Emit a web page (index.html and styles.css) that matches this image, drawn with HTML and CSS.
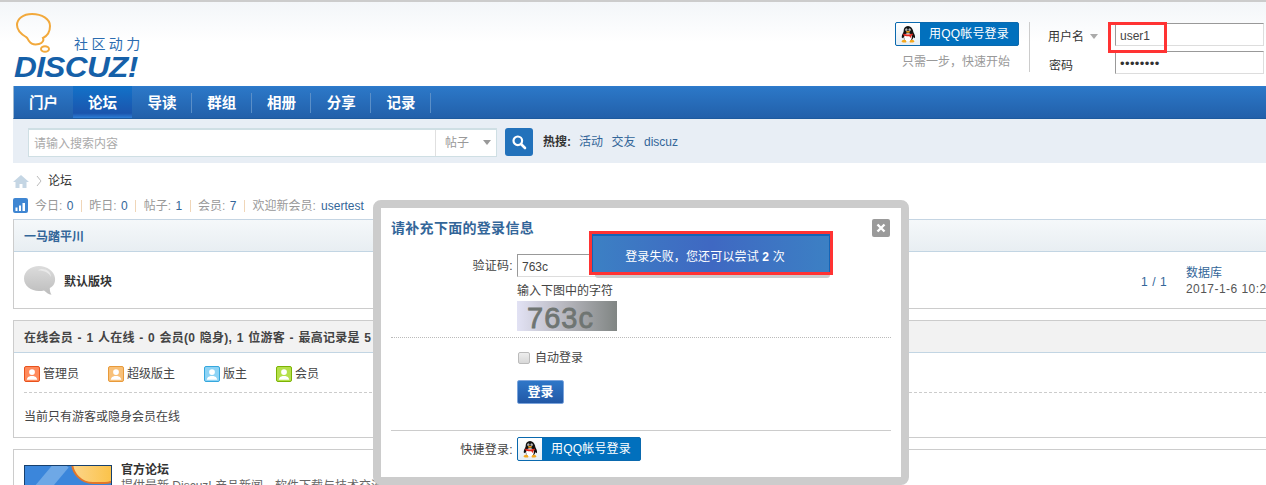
FILE: index.html
```html
<!DOCTYPE html>
<html lang="zh-CN">
<head>
<meta charset="utf-8">
<title>Discuz! 论坛</title>
<link rel="stylesheet" href="styles.css">
</head>
<body>
<svg class="defs" width="0" height="0" aria-hidden="true">
  <defs>
    <symbol id="qq" viewBox="0 0 20 22">
      <path d="M10 1C6.400 1 4.600 3.800 4.600 7c0 1-.2 1.600-.8 2.800C2.600 12 1.800 14 2.400 16c.5.6 1.200-.2 1.700-1.200.5 2 1.600 3.400 2.600 4.200h7.600c1-.8 2.100-2.200 2.600-4.200.5 1 1.200 1.800 1.700 1.200.6-2-.2-4-1.400-6.200-.6-1.200-.8-1.800-.8-2.800C15.400 3.800 13.600 1 10 1z" fill="#111"/>
      <ellipse cx="10" cy="15" rx="4.800" ry="5" fill="#fff"/>
      <ellipse cx="8" cy="5.800" rx="1.300" ry="1.800" fill="#fff"/>
      <ellipse cx="12" cy="5.800" rx="1.300" ry="1.800" fill="#fff"/>
      <circle cx="8.300" cy="6" r=".7" fill="#111"/>
      <circle cx="11.700" cy="6" r=".7" fill="#111"/>
      <ellipse cx="10" cy="8.300" rx="2.600" ry="1.100" fill="#f5a81c"/>
      <path d="M4.300 10.300c3.500 1.700 7.900 1.700 11.400 0l.5 1.900c-.8.500-1.600.8-2.400 1l.4 3.300-2.600-2.700c-2.500.4-5.200.1-7.700-1.600z" fill="#e0261c"/>
      <path d="M3.500 18.500c2-1 4.500.3 4.500 2.200 0 .8-1 1-2.500 1-2 0-3.500-.6-3.500-1.400 0-.7.600-1.300 1.500-1.800zM16.500 18.500c-2-1-4.500.3-4.500 2.200 0 .8 1 1 2.500 1 2 0 3.500-.6 3.500-1.400 0-.7-.6-1.300-1.500-1.800z" fill="#f5a81c"/>
    </symbol>
    <symbol id="user" viewBox="0 0 16 16">
      <circle cx="8" cy="5.800" r="3.300" fill="#fff"/>
      <path d="M2 14.500c.3-2.800 2.500-3.600 4.300-4.200h3.400c1.800.6 4 1.400 4.300 4.200z" fill="#fff"/>
    </symbol>
  </defs>
</svg>

<div class="page">
  <div class="topline"></div>

  <header class="header">
    <div class="logo">
      <svg class="bubble" width="38" height="42" viewBox="0 0 38 42">
        <path d="M17 1C8 1 2 6 2 12c0 5 4 9 9 12 2 1 2 3 3 4 2 3 6 4 10 3 4-1 5-4 4-6 4-2 7-6 7-12C35 6 27 1 17 1z" fill="none" stroke="#f2a93c" stroke-width="2"/>
        <ellipse cx="30" cy="36" rx="4" ry="2.800" fill="none" stroke="#f2a93c" stroke-width="2"/>
      </svg>
      <span class="slogan">社区动力</span>
      <span class="wordmark">DISCUZ!</span>
    </div>

    <div class="qq-area">
      <a class="qq-btn"><span class="qq-ico"><svg width="16" height="18"><use href="#qq"/></svg></span><span class="qq-txt">用QQ帐号登录</span></a>
      <p class="qq-note">只需一步，快速开始</p>
    </div>

    <form class="login">
      <div class="login-row">
        <span class="login-label">用户名<i class="caret"></i></span>
        <span class="field">user1</span>
      </div>
      <div class="login-row">
        <span class="login-label pw">密码</span>
        <span class="field dots">••••••••</span>
      </div>
      <span class="mark-user"></span>
    </form>
  </header>

  <nav class="nav">
    <a class="nav-item plain">门户</a>
    <a class="nav-item active">论坛</a>
    <a class="nav-item">导读</a>
    <a class="nav-item">群组</a>
    <a class="nav-item">相册</a>
    <a class="nav-item">分享</a>
    <a class="nav-item">记录</a>
  </nav>

  <div class="search">
    <div class="search-box">
      <span class="search-input">请输入搜索内容</span>
      <span class="search-type">帖子<i class="caret dark"></i></span>
    </div>
    <a class="search-btn">
      <svg width="16" height="16" viewBox="0 0 16 16"><circle cx="6.800" cy="6.800" r="4.300" fill="none" stroke="#fff" stroke-width="2.200"/><path d="M10 10l4 4" stroke="#fff" stroke-width="2.600" stroke-linecap="round"/></svg>
    </a>
    <strong class="hot-title">热搜:</strong>
    <a class="hot">活动</a>
    <a class="hot">交友</a>
    <a class="hot">discuz</a>
  </div>

  <div class="crumb">
    <svg width="16" height="13" viewBox="0 0 16 13"><path d="M8 0L0 7h2.500v6h4V9h3v4h4V7H16z" fill="#c5d6e4"/></svg>
    <svg class="chev" width="6" height="12" viewBox="0 0 6 12"><path d="M1 1l4 5-4 5" fill="none" stroke="#bbb"/></svg>
    <span>论坛</span>
  </div>

  <div class="stats">
    <span class="stats-ico"><svg width="15" height="15" viewBox="0 0 15 15"><path d="M2.500 9.500h2V13h-2zM6 7.500h2V13H6zM9.500 5h2.500v8H9.500z" fill="#fff"/></svg></span>
    <span>今日: <em>0</em></span><i class="sep"></i>
    <span>昨日: <em>0</em></span><i class="sep"></i>
    <span>帖子: <em>1</em></span><i class="sep"></i>
    <span>会员: <em>7</em></span><i class="sep"></i>
    <span>欢迎新会员: <em>usertest</em></span>
  </div>

  <section class="box first">
    <h2 class="box-head blue">一马踏平川</h2>
    <div class="forum-row">
      <svg class="forum-ico" width="32" height="29" viewBox="0 0 32 29">
        <defs><linearGradient id="g" x1="0" y1="0" x2="0" y2="1"><stop offset="0" stop-color="#dcdcdc"/><stop offset="1" stop-color="#bdbdbd"/></linearGradient></defs>
        <path d="M15 0C7 0 0 5 0 12.500S7 25 15 25c2.500 0 3.500-.2 5-.6 2 1.800 4.500 3.800 7.500 4.300-1-1.300-1.800-3.700-1.700-6.600C29.800 20 31.500 16.500 31 12 30.300 5 23 0 15 0z" fill="url(#g)"/>
        <path d="M18 3c5 0 9 3 9 8-2-4-6-6.500-13-6.500 1-1 2.500-1.500 4-1.500z" fill="#e9e9e9"/>
      </svg>
      <strong class="forum-name">默认版块</strong>
      <span class="forum-count">1 / 1</span>
      <div class="forum-last">
        <a>数据库</a>
        <span class="forum-date">2017-1-6 10:28</span>
      </div>
    </div>
  </section>

  <section class="box second">
    <h2 class="box-head grey">在线会员 - 1 人在线 - 0 会员(0 隐身), 1 位游客 - 最高记录是 5 于 2017-1-6.</h2>
    <div class="legend">
      <span class="legend-item w1"><i class="badge c1"><svg width="14" height="14"><use href="#user"/></svg></i>管理员</span>
      <span class="legend-item w2"><i class="badge c2"><svg width="14" height="14"><use href="#user"/></svg></i>超级版主</span>
      <span class="legend-item w3"><i class="badge c3"><svg width="14" height="14"><use href="#user"/></svg></i>版主</span>
      <span class="legend-item"><i class="badge c4"><svg width="14" height="14"><use href="#user"/></svg></i>会员</span>
    </div>
    <p class="online-note">当前只有游客或隐身会员在线</p>
  </section>

  <section class="box third">
    <div class="thumb"><span class="shine"></span><span class="cloud"></span><span class="thumb-text">Discuz!</span></div>
    <div class="third-text">
      <strong>官方论坛</strong>
      <p>提供最新 Discuz! 产品新闻、软件下载与技术交流</p>
    </div>
  </section>
</div>

<div class="modal">
  <h3 class="modal-title">请补充下面的登录信息</h3>
  <a class="modal-close"><svg width="10" height="10" viewBox="0 0 10 10"><path d="M1.500 1.500l7 7M8.500 1.500l-7 7" stroke="#fff" stroke-width="2.400"/></svg></a>
  <div class="mrow captcha-row">
    <label class="mlabel">验证码:</label>
    <span class="minput">763c</span>
  </div>
  <div class="mbody">
    <p class="hint">输入下图中的字符</p>
    <div class="captcha">763c</div>
  </div>
  <hr class="dotted">
  <label class="mbody auto"><span class="check"></span>自动登录</label>
  <div class="mbody"><a class="submit">登录</a></div>
  <hr class="solid">
  <div class="mrow">
    <span class="mlabel quick">快捷登录:</span>
    <a class="qq-btn"><span class="qq-ico"><svg width="16" height="18"><use href="#qq"/></svg></span><span class="qq-txt">用QQ帐号登录</span></a>
  </div>
</div>

<div class="toast"><div class="toast-inner">登录失败，您还可以尝试 <b>2</b> 次</div></div>
</body>
</html>
```

FILE: styles.css
```css
* { box-sizing: border-box; }
html, body { margin: 0; height: 485px; overflow: hidden; background: #fff; }
body { font: 12px/1.5 "Liberation Sans", "Noto Sans CJK SC", sans-serif; color: #444; position: relative; }
h2, h3, p { margin: 0; }
em { font-style: normal; color: #369; margin-left: 1px; }
a { color: #369; }
.defs { position: absolute; }
.page { width: 1266px; }
.topline { height: 2px; background: #ccc; }

/* header */
.header { height: 84px; padding-left: 14px; display: flex; background: linear-gradient(#f3f6f9, #fff 40px); }
.logo { width: 881px; position: relative; }
.bubble { display: block; margin-top: 11px; margin-left: 1px; }
.slogan { position: absolute; left: 60px; top: 32px; font-size: 14px; line-height: 20px; letter-spacing: 3.4px; color: #2b6cb0; }
.wordmark { position: absolute; left: 0; top: 49px; font: italic 700 29px/32px "Liberation Sans", sans-serif; color: #1560a8; letter-spacing: -.6px; transform: scaleX(1.09); transform-origin: left; }
.qq-area { width: 134px; padding-top: 20px; height: 70px; }
.qq-btn { display: flex; width: 124px; height: 24px; border: 1px solid #0a69ae; border-radius: 2px; background: #0170bd; overflow: hidden; color: #fff; }
.qq-ico { width: 24px; flex: none; background: linear-gradient(#fff, #e4eef5); display: flex; align-items: center; justify-content: center; }
.qq-txt { flex: 1; text-align: center; line-height: 22px; font-size: 12px; letter-spacing: .2px; }
.qq-note { width: 124px; margin-top: 7px; padding-right: 2px; text-align: center; color: #999; line-height: 18px; }
.login { position: relative; width: 237px; height: 50px; margin-top: 20px; padding-left: 18px; border-left: 1px solid #ccc; display: flex; flex-direction: column; gap: 5px; }
.login-row { display: flex; align-items: center; height: 23px; margin-top: 1px; }
.login-row + .login-row { margin-top: 0; }
.login-label { width: 67px; padding-top: 4px; color: #333; display: block; }
.login-label.pw { padding: 6px 0 0 1px; }
.field { width: 149px; height: 23px; border: 1px solid #ddd; border-top-color: #999; border-left-color: #999; padding-left: 4px; line-height: 24px; color: #444; background: #fff; }
.dots { font-size: 13px; letter-spacing: .4px; color: #333; }
.caret { display: inline-block; width: 0; height: 0; margin-left: 6px; vertical-align: 2px; border: 4px solid transparent; border-top: 5px solid #aaa; border-bottom: 0; }
.caret.dark { margin-left: 14px; border-top-color: #999; }
.mark-user { position: absolute; left: 78px; top: 0; width: 59px; height: 31px; border: 3px solid #f33; }

/* nav */
.nav { margin-left: 13px; height: 33px; display: flex; background: linear-gradient(#2f7dcf 0, #2c78c8 3%, #2260aa 100%); border-left: 1px solid #9fb8d0; border-bottom: 1px solid #1d5a9e; }
.nav-item { width: 59.800px; height: 32px; line-height: 34px; text-align: center; color: #fff; font-size: 14.500px; font-weight: 700; position: relative; }
.nav-item:nth-child(n+3)::after { content: ""; position: absolute; right: 0; top: 7px; height: 20px; width: 1px; background: #5a8fc8; }
.plain { width: 59px; }
.nav-item.active { width: 59px; background: linear-gradient(#1272c9, #1b55ad 85%, #2e7ed6); }

/* search */
.search { margin-left: 13px; height: 44px; padding: 9px 0 0 15px; background: #e8eef5; display: flex; }
.search-box { width: 469px; height: 29px; border: 1px solid #cfdfe4; border-top-width: 2px; background: #fff; display: flex; color: #aaa; }
.search-input { flex: 1; padding-left: 5px; line-height: 29px; }
.search-type { width: 61px; border-left: 1px solid #e0e0e0; padding-left: 9px; line-height: 27px; color: #999; }
.search-btn { width: 28px; height: 28px; margin-left: 8px; border-radius: 3px; background: #2272bb; display: flex; align-items: center; justify-content: center; }
.hot-title { margin-left: 10px; line-height: 28px; color: #333; }
.hot { margin-left: 8.500px; line-height: 28px; }
.hot-title + .hot { margin-left: 8px; }

/* breadcrumb + stats */
.crumb { margin: 9px 0 0 13px; height: 18px; display: flex; align-items: center; color: #333; }
.chev { margin: 0 6px 0 7px; }
.stats { margin: 8px 0 0 13px; height: 15px; display: flex; align-items: center; color: #999; }
.stats-ico { width: 15px; height: 15px; margin-right: 7px; background: #3f86d2; border-radius: 2px; }
.stats-ico svg { display: block; }
.sep { width: 1px; height: 12px; margin: 0 7.500px; background: #f0d6b8; }
.stats span:last-child em { margin-left: 2px; }

/* boxes */
.box { margin: 0 0 11px 13px; width: 1300px; border: 1px solid #ccc; }
.first { margin-top: 6px; height: 90px; border-color: #c5d5e3 #ccc #ccc; }
.box-head { height: 32px; padding-left: 10px; font-size: 12px; line-height: 34px; font-weight: 700; border-bottom: 1px solid #c2d5e3; }
.blue { color: #369; background: linear-gradient(#f5f8fa, #e8eef2); }
.grey { color: #444; background: #f2f2f2; white-space: nowrap; letter-spacing: .25px; word-spacing: 1px; line-height: 35px; }
.forum-row { height: 56px; padding-left: 10px; display: flex; align-items: center; position: relative; }
.forum-name { margin-left: 8px; padding-top: 4px; color: #333; }
.forum-count { position: absolute; left: 1127px; top: 21px; color: #369; letter-spacing: .6px; }
.forum-last { position: absolute; left: 1172px; top: 13px; display: flex; flex-direction: column; line-height: 16px; color: #369; white-space: nowrap; }
.forum-date { color: #555; letter-spacing: .45px; }
.second { height: 118px; }
.legend { margin: 0 10px; height: 40px; padding-top: 12px; display: flex; border-bottom: 1px dashed #ccc; }
.legend-item { display: flex; align-items: center; height: 18px; color: #444; }
.w1 { width: 84px; }
.w2 { width: 96px; }
.w3 { width: 72px; }
.badge { width: 16px; height: 16px; margin-right: 3px; border-radius: 2px; border: 1px solid; display: block; }
.badge svg { display: block; }
.c1 { background: #ff8a5c; border-color: #e8521c; }
.c2 { background: #f8c078; border-color: #e89a3a; }
.c3 { background: #8dd3f5; border-color: #35a7dd; }
.c4 { background: #b5e04a; border-color: #7cb305; }
.online-note { margin: 15px 0 0 10px; line-height: 18px; color: #444; }
.third { height: 60px; padding: 15px 0 0 10px; display: flex; }
.thumb { width: 88px; height: 60px; border: 1px solid #17406e; background: #3b86db; position: relative; overflow: hidden; }
.shine { position: absolute; left: 12px; top: -10px; width: 14px; height: 60px; background: #6ea8e6; transform: rotate(40deg); }
.cloud { position: absolute; left: 46px; top: -12px; width: 50px; height: 30px; border-radius: 0 0 16px 22px; background: linear-gradient(90deg, #fcd58a, #fbbf3d); border: 2px solid #e2762a; }
.thumb-text { position: absolute; left: 5px; top: 15px; color: #fff; font-weight: 700; font-size: 13px; }
.third-text { margin: -3px 0 0 9px; line-height: 16px; color: #666; }
.third-text strong { display: block; color: #333; }

/* modal */
.modal { position: absolute; left: 373px; top: 200px; width: 536px; height: 285px; border: 8px solid #ccc; border-radius: 8px; background: #fff; padding: 10px 10px 0; }
.modal-title { height: 20px; font-size: 14px; line-height: 20px; font-weight: 700; letter-spacing: .3px; color: #369; }
.modal-close { position: absolute; left: 491px; top: 11px; width: 18px; height: 18px; border-radius: 2px; background: #9a9a9a; display: flex; align-items: center; justify-content: center; }
.mrow { display: flex; align-items: center; }
.captcha-row { margin-top: 16px; }
.mlabel { width: 122px; margin-right: 4px; text-align: right; color: #444; letter-spacing: .3px; }
.quick { padding-top: 2px; }
.minput { width: 150px; height: 23px; padding-left: 4px; line-height: 24px; border: 1px solid #ddd; border-top-color: #999; border-left-color: #999; color: #444; }
.mbody { display: block; margin-left: 126px; }
.hint { margin-top: 5px; line-height: 18px; color: #444; }
.captcha { width: 100px; height: 30px; margin-top: 1px; background: linear-gradient(90deg, #e2e2f4, #b5b5bc 50%, #808583); color: #6f7572; font: 400 29px/34px "Liberation Sans", sans-serif; -webkit-text-stroke: .8px #6f7572; letter-spacing: 1px; padding-left: 10px; overflow: hidden; white-space: nowrap; }
.dotted { height: 0; margin: 6px 0 0; border: 0; border-top: 1px dotted #bbb; }
.auto { display: flex; align-items: center; height: 18px; margin-top: 11px; margin-bottom: -1px; color: #444; }
.check { width: 12px; height: 12px; margin: 0 5px 0 1px; border: 1px solid #bbb; border-radius: 2px; background: linear-gradient(#eee, #d8d8d8); }
.submit { display: block; width: 47px; height: 24px; margin-top: 14px; border: 1px solid #7ba4dc; border-radius: 2px; background: linear-gradient(#2f77c8, #2258a6); color: #fff; font-weight: 700; text-align: center; line-height: 22px; font-size: 13px; }
.solid { height: 0; margin: 26px 0 0; border: 0; border-top: 1px solid #ccc; }
.solid + .mrow { margin-top: 6px; }

/* toast */
.toast { position: absolute; left: 589px; top: 231px; width: 244px; height: 44px; border: 3px solid #f33; }
.toast::after { content: ""; position: absolute; left: 3px; right: 0; bottom: -6px; height: 3px; background: #ccc; border-radius: 0 0 3px 3px; }
.toast-inner { height: 38px; padding: 5px 12px 0 0; border-top: 2px solid #1265b8; border-left: 1px solid #1265b8; border-right: 1px solid #1265b8; background: linear-gradient(90deg, #3c80c4, #3f68c2 50%, #3c80c4); color: #fff; text-align: center; letter-spacing: .15px; line-height: 32px; }
```
